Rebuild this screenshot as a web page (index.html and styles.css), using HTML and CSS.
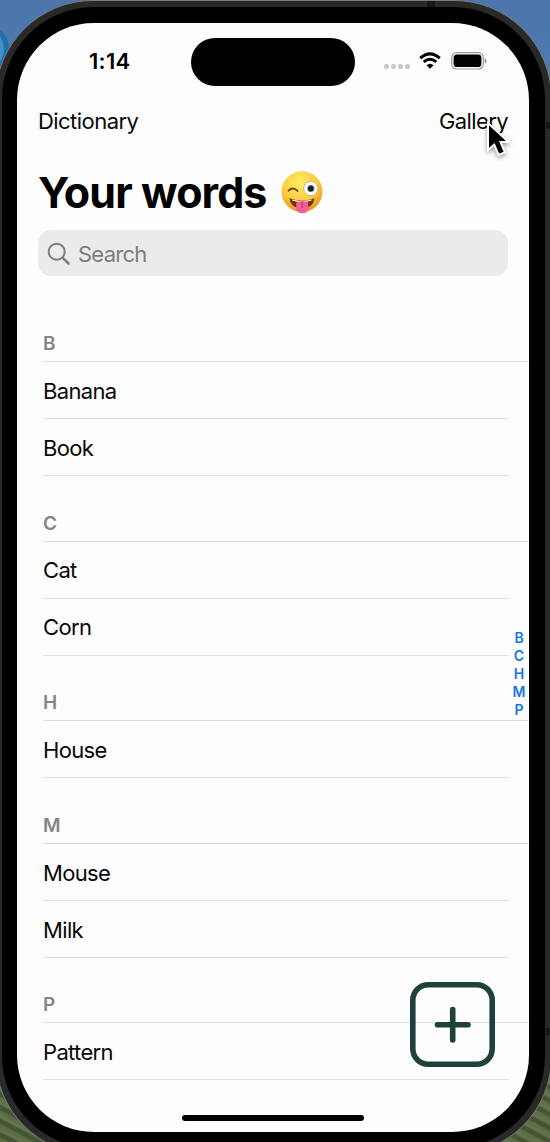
FILE: index.html
```html
<!DOCTYPE html>
<html lang="en">
<head>
<meta charset="utf-8">
<title>Your words</title>
<link rel="stylesheet" href="styles.css">
</head>
<body>
<div class="desktop">
  <div class="sky-mark"></div>
  <div class="phone">
    <div class="bezel">
      <main class="screen">
        <header class="status">
          <span class="time">1:14</span>
          <div class="island"></div>
          <div class="indicators">
            <div class="dots"><i></i><i></i><i></i><i></i></div>
            <svg class="wifi" width="22" height="17" viewBox="0 0 22 17">
              <path d="M1.2 6.2Q11-2.4 20.8 6.2" fill="none" stroke="#000" stroke-width="3"/>
              <path d="M4.700 9.900Q11 4.700 17.300 9.900" fill="none" stroke="#000" stroke-width="2.800"/>
              <path d="M7.500 13.300Q11 10 14.500 13.300L11 16.800Z"/>
            </svg>
            <svg class="battery" width="36" height="18" viewBox="0 0 36 18">
              <rect x=".7" y=".7" width="31.600" height="16.300" rx="5" fill="none" stroke="#999" stroke-width="1.200"/>
              <rect x="2.600" y="2.600" width="27.800" height="12.500" rx="3.400"/>
              <path d="M33.600 6.200q2 .6 2 2.700t-2 2.700z" fill="#999"/>
            </svg>
          </div>
        </header>
        <nav class="nav">
          <span class="nav-dictionary">Dictionary</span>
          <span class="nav-gallery">Gallery</span>
        </nav>
        <div class="title">
          <h1>Your words</h1>
          <svg class="face" width="44" height="44" viewBox="0 0 44 44">
            <defs>
              <radialGradient id="skin" cx=".45" cy=".3" r=".72">
                <stop offset="0" stop-color="#ffed68"/>
                <stop offset=".6" stop-color="#fccb3c"/>
                <stop offset="1" stop-color="#e98e14"/>
              </radialGradient>
            </defs>
            <circle cx="22" cy="21.600" r="20.400" fill="url(#skin)"/>
            <path d="M8.500 20.600q4.400-4.400 9 .3" fill="none" stroke="#76420d" stroke-width="2" stroke-linecap="round"/>
            <circle cx="30.800" cy="18.600" r="7.100" fill="#fff" stroke="#b9a78c" stroke-width=".8"/>
            <circle cx="30.800" cy="18.600" r="3.500" fill="#56727e"/>
            <circle cx="30.800" cy="18.600" r="2.600" fill="#15191c"/>
            <path d="M9.400 28.300q12.800 4.700 25 0-1.200 10.200-12.400 10.200T9.400 28.300z" fill="#733109"/>
            <path d="M12 29.600q10 2.800 19.800 0l-.6 1.200q-9.300 2.400-18.600 0z" fill="#fff"/>
            <path d="M16.200 32.500q6-3.200 12 0v5.500q0 5.300-6 5.300t-6-5.300z" fill="#f75c9b"/>
            <path d="M22.200 32.500v5" stroke="#cf2c70" stroke-width="1.200" stroke-linecap="round"/>
          </svg>
        </div>
        <div class="search">
          <svg width="24" height="24" viewBox="0 0 24 24" fill="none" stroke="#7d7d80" stroke-linecap="round">
            <circle cx="9.700" cy="9.700" r="8" stroke-width="2"/>
            <path d="M15.800 15.800L21.500 21.500" stroke-width="2.500"/>
          </svg>
          <span>Search</span>
        </div>
        <div class="list">
          <section><h2>B</h2><p>Banana</p><p>Book</p></section>
          <section><h2>C</h2><p>Cat</p><p>Corn</p></section>
          <section><h2>H</h2><p>House</p></section>
          <section><h2>M</h2><p>Mouse</p><p>Milk</p></section>
          <section><h2>P</h2><p>Pattern</p></section>
        </div>
        <div class="index"><span>B</span><span>C</span><span>H</span><span>M</span><span>P</span></div>
        <svg class="add" width="86" height="86" viewBox="0 0 86 86" fill="none" stroke="#1c4239">
          <rect x="2.800" y="2.800" width="79.400" height="79.400" rx="15.500" stroke-width="5.600"/>
          <path d="M42.700 27.500v30.500M27.500 42.700h30.500" stroke-width="5.600" stroke-linecap="round"/>
        </svg>
        <div class="home"></div>
      </main>
    </div>
  </div>
  <i class="seam seam-top"></i><i class="seam seam-right"></i><i class="seam seam-low"></i>
  <svg class="cursor" width="30" height="42" viewBox="0 0 30 42">
    <path d="M3 3v27l6.200-5.400 4.400 10.400 6.300-2.700-4.400-10.200h8z" fill="#000" stroke="#fff" stroke-width="2"/>
  </svg>
</div>
</body>
</html>
```
FILE: styles.css
```css
* { box-sizing: border-box; }
body { margin: 0; overflow: hidden; font-family: Inter, "Liberation Sans", sans-serif; color: #080808; }
.desktop {
  position: relative;
  width: 550px;
  height: 1142px;
  overflow: hidden;
  background:
    repeating-linear-gradient(28deg, #75865b66 0 3px, #35442a66 5px 8px, #91a07855 10px 12px) 0 1040px / 550px 102px no-repeat,
    linear-gradient(#4b75ab, #507cb3 80px, #5b7f9b 500px, #566640 1000px, #4e5e3a);
}
.sky-mark { position: absolute; left: -20px; top: 29px; width: 29px; height: 40px; border: 5px solid #216fa7; border-radius: 50%; background: #3f91c9; }
.phone {
  position: relative;
  width: 557px;
  height: 1155px;
  margin-left: -5.500px;
  border: 1px solid #777b7d;
  border-radius: 98px;
  padding: 6px;
  background: #292928;
}
.bezel { height: 100%; padding: 16px 15.500px; border-radius: 92px; background: #000; }
.screen {
  position: relative;
  display: flex;
  flex-direction: column;
  width: 512px;
  height: 1109px;
  border-radius: 77px;
  background: #fdfdfd;
  overflow: hidden;
}
.status { display: grid; grid-template-columns: 174px 164px 1fr; height: 63px; padding-top: 15px; }
.time { padding: 9px 0 0 72px; font-size: 22px; font-weight: 600; line-height: 28px; letter-spacing: .3px; color: #000; }
.island { height: 48px; border-radius: 24px; background: #000; }
.indicators { display: flex; align-items: flex-start; padding: 14px 0 0 29px; }
.dots { display: flex; gap: 2px; margin: 12px 9px 0 0; }
.dots i { width: 5px; height: 5px; border-radius: 2px; background: #c9c9c9; }
.wifi { margin-right: 10px; }
.nav { display: flex; justify-content: space-between; padding: 21px 21px 0; height: 72px; font-size: 22px; line-height: 28px; }
.nav-dictionary { letter-spacing: -.55px; }
.nav-gallery { letter-spacing: -.6px; }
.title { display: flex; height: 72px; padding: 7px 21px 0; gap: 13px; }
h1 { margin: 0; font-size: 43px; line-height: 54px; letter-spacing: -.9px; font-weight: 700; color: #000; }
.face { margin-top: 5px; }
.search { display: flex; align-items: center; gap: 7px; height: 46px; margin: 0 21px; padding: 1px 0 0 9px; border-radius: 13px; background: #ebebec; color: #7d7d80; font-size: 22px; letter-spacing: -.75px; }
.list { padding: 20.400px 0 0 26px; }
h2 { display: flex; align-items: flex-end; height: 65.600px; margin: 0; padding-bottom: 5px; border-bottom: 1px solid #dedede; font-size: 19px; line-height: 24px; font-weight: 600; color: #858587; }
.list p { display: flex; align-items: center; height: 57px; margin: 0 20px 0 0; padding-top: 1.500px; border-bottom: 1px solid #e2e2e2; font-size: 22px; letter-spacing: -.65px; }
.index { position: absolute; right: 0; top: 606px; width: 20px; display: flex; flex-direction: column; align-items: center; font-size: 14px; line-height: 18px; font-weight: 600; color: #1477e6; }
.add { position: absolute; left: 393px; top: 959px; }
.home { position: absolute; left: 165px; top: 1092px; width: 182px; height: 6px; border-radius: 3px; background: #000; }
.seam { position: absolute; background: #171717; }
.seam-top { left: 427px; top: 1px; width: 8px; height: 6px; }
.seam-right { left: 546px; top: 122px; width: 4px; height: 7px; }
.seam-low { left: 546px; top: 1028px; width: 4px; height: 7px; }
.cursor { position: absolute; left: 485px; top: 120px; filter: drop-shadow(0 2px 2px #0006); }
```
